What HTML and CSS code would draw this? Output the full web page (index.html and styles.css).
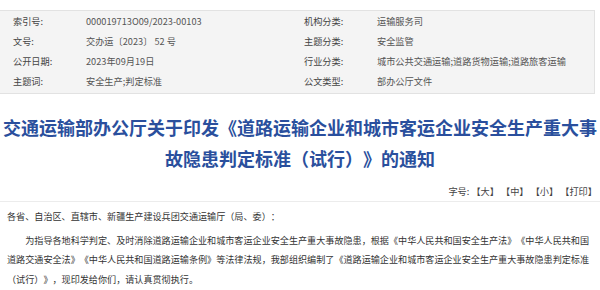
FILE: index.html
```html
<!DOCTYPE html>
<html lang="zh-CN">
<head>
    <meta charset="UTF-8">
    <meta name="viewport" content="width=device-width, initial-scale=1.0">
    <title>交通运输部办公厅关于印发《道路运输企业和城市客运企业安全生产重大事故隐患判定标准（试行）》的通知</title>
    <link rel="stylesheet" href="styles.css">
</head>
<body>

<div class="meta">
    <div class="meta-row">
        <span class="meta-label">索引号:</span>
        <span class="meta-value">000019713O09/2023-00103</span>
    </div>
    <div class="meta-row">
        <span class="meta-label">机构分类:</span>
        <span class="meta-value">运输服务司</span>
    </div>
    <div class="meta-row">
        <span class="meta-label">文号:</span>
        <span class="meta-value">交办运〔2023〕 52 号</span>
    </div>
    <div class="meta-row">
        <span class="meta-label">主题分类:</span>
        <span class="meta-value">安全监管</span>
    </div>
    <div class="meta-row">
        <span class="meta-label">公开日期:</span>
        <span class="meta-value">2023年09月19日</span>
    </div>
    <div class="meta-row">
        <span class="meta-label">行业分类:</span>
        <span class="meta-value">城市公共交通运输;道路货物运输;道路旅客运输</span>
    </div>
    <div class="meta-row">
        <span class="meta-label">主题词:</span>
        <span class="meta-value">安全生产;判定标准</span>
    </div>
    <div class="meta-row">
        <span class="meta-label">公文类型:</span>
        <span class="meta-value">部办公厅文件</span>
    </div>
</div>

<h1 class="title">交通运输部办公厅关于印发《道路运输企业和城市客运企业安全生产重大事故隐患判定标准（试行）》的通知</h1>

<div class="tools">
    字号: <a href="#">【大】</a> <a href="#">【中】</a> <a href="#">【小】</a> <a href="#">【打印】</a>
</div>

<div class="content">
    <p class="greeting">各省、自治区、直辖市、新疆生产建设兵团交通运输厅（局、委）：</p>
    <p class="para">为指导各地科学判定、及时消除道路运输企业和城市客运企业安全生产重大事故隐患，根据《中华人民共和国安全生产法》《中华人民共和国道路交通安全法》《中华人民共和国道路运输条例》等法律法规，我部组织编制了《道路运输企业和城市客运企业安全生产重大事故隐患判定标准（试行）》，现印发给你们，请认真贯彻执行。</p>
</div>

</body>
</html>
```

FILE: styles.css
```css
body {
    margin: 0;
    padding: 0;
    background-color: #fff;
    font-family: "Noto Sans CJK SC", "Noto Sans", sans-serif;
    color: #333;
    text-spacing-trim: space-all;
}
.meta {
    margin: 10px 5px 0 0;
    padding: 0 0 2px;
    background-color: #f4f4f4;
    border: 1px solid #e2e2e2;
    border-left: none;
    display: grid;
    grid-template-columns: 1fr 1fr;
}
.meta-row {
    display: flex;
    height: 20px;
    align-items: center;
    font-size: 9.2px;
}
.meta-row:nth-child(odd) {
    padding-left: 13px;
}
.meta-row:nth-child(even) {
    padding-left: 7px;
}
.meta-label {
    width: 73px;
    color: #444;
}
.meta-value {
    color: #555;
}
.title {
    margin: 18px 0 0;
    font-size: 18px;
    line-height: 31px;
    font-weight: bold;
    color: #2a4f9d;
    text-align: center;
}
.tools {
    margin-top: 7px;
    height: 20px;
    line-height: 20px;
    font-size: 9.2px;
    text-align: right;
    padding-right: 3px;
    border-bottom: 1px solid #ececec;
    color: #444;
}
.tools a {
    color: #444;
    text-decoration: none;
}
.content {
    padding: 5px 7px 0;
    width: 587px;
    font-size: 9.1px;
    line-height: 19.5px;
    color: #333;
}
.greeting {
    margin: 0 0 4px;
}
.para {
    margin: 0;
    text-indent: 2em;
}
```
